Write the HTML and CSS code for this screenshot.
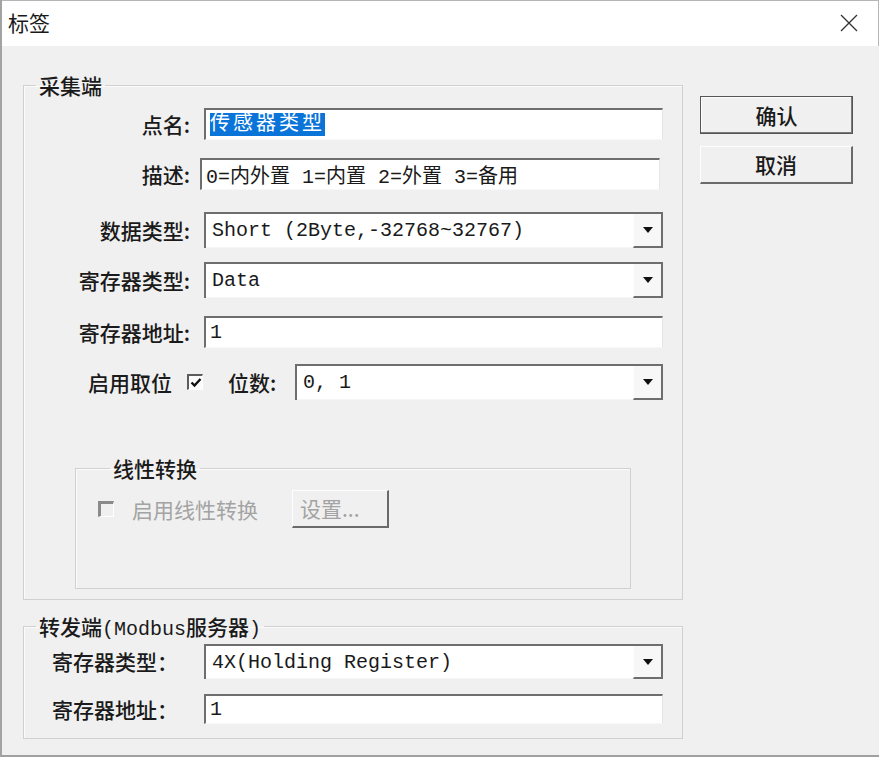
FILE: index.html
```html
<!DOCTYPE html>
<html lang="zh-CN">
<head>
    <meta charset="UTF-8">
    <title>标签</title>
    <link rel="stylesheet" href="styles.css">
</head>
<body>

<div class="window">
    <!-- Title bar -->
    <div class="titlebar">
        <span class="title">标签</span>
        <svg class="close" width="18" height="18" viewBox="0 0 18 18">
            <path d="M1 1L17 17M17 1L1 17" stroke="#333" stroke-width="1.3" fill="none"/>
        </svg>
    </div>

    <div class="content">
        <div class="main">
            <!-- 采集端 -->
            <fieldset class="group group-collect">
                <legend>采集端</legend>

                <div class="row r1">
                    <label>点名:</label>
                    <div class="edit"><span class="selected">传感器类型</span></div>
                </div>

                <div class="row r2">
                    <label>描述:</label>
                    <div class="edit shifted">0=内外置 1=内置 2=外置 3=备用</div>
                </div>

                <div class="row r3">
                    <label>数据类型:</label>
                    <div class="combo">
                        <div class="combo-text">Short (2Byte,-32768~32767)</div>
                        <div class="combo-btn"><span class="arrow"></span></div>
                    </div>
                </div>

                <div class="row r4">
                    <label>寄存器类型:</label>
                    <div class="combo">
                        <div class="combo-text">Data</div>
                        <div class="combo-btn"><span class="arrow"></span></div>
                    </div>
                </div>

                <div class="row r5">
                    <label>寄存器地址:</label>
                    <div class="edit">1</div>
                </div>

                <div class="row r6">
                    <span class="bit-label">启用取位</span>
                    <span class="check checked">
                        <svg width="12" height="12" viewBox="0 0 12 12"><path d="M1.5 5.5L4.5 8.5L10.5 2" stroke="#111" stroke-width="2.4" fill="none"/></svg>
                    </span>
                    <span class="count-label">位数:</span>
                    <div class="combo">
                        <div class="combo-text">0, 1</div>
                        <div class="combo-btn"><span class="arrow"></span></div>
                    </div>
                </div>

                <!-- 线性转换 -->
                <fieldset class="group sub-group">
                    <legend>线性转换</legend>
                    <div class="linear-row">
                        <span class="check disabled"></span>
                        <span class="disabled-text">启用线性转换</span>
                        <button class="btn small" disabled>设置...</button>
                    </div>
                </fieldset>
            </fieldset>

            <!-- 转发端 -->
            <fieldset class="group group-forward">
                <legend>转发端<span class="mono">(Modbus</span>服务器<span class="mono">)</span></legend>

                <div class="row f1">
                    <label>寄存器类型：</label>
                    <div class="combo">
                        <div class="combo-text">4X(Holding Register)</div>
                        <div class="combo-btn"><span class="arrow"></span></div>
                    </div>
                </div>

                <div class="row f2">
                    <label>寄存器地址：</label>
                    <div class="edit">1</div>
                </div>
            </fieldset>
        </div>

        <!-- Buttons -->
        <div class="actions">
            <button class="btn default">确认</button>
            <button class="btn">取消</button>
        </div>
    </div>
</div>

</body>
</html>
```

FILE: styles.css
```css
* {
    box-sizing: border-box;
}

body {
    margin: 0;
    font-family: "Noto Sans CJK SC", sans-serif;
    font-size: 21px;
    font-weight: 500;
    color: #1a1a1a;
    background-color: #fff;
}

.window {
    height: 757px;
    display: flex;
    flex-direction: column;
    border-left: 2px solid #a3a3a3;
    border-bottom: 2px solid #a0a0a0;
    background-color: #f0f0f0;
}

/* Title bar */
.titlebar {
    height: 46px;
    display: flex;
    align-items: center;
    justify-content: space-between;
    background-color: #fff;
    border-top: 1px solid #b5b5b5;
    border-right: 1px solid #b5b5b5;
    padding: 0 20px 0 6px;
}

.title {
    font-size: 21px;
    font-weight: 400;
    line-height: 1;
    margin-top: -2px;
}

.close {
    margin-top: -2px;
}

.content {
    flex: 1;
    display: flex;
    padding: 26px 0 0 21px;
}

.main {
    width: 660px;
}

/* Group boxes */
.group {
    margin: 0;
    padding: 0 19px 10px 0;
    border: 1px solid #d0d0d0;
    box-shadow: inset 1px 1px 0 #fbfbfb;
}

.group legend {
    margin-left: 12px;
    padding: 0 3px;
    height: 26px;
    line-height: 26px;
    font-size: 21px;
}

.mono {
    font-family: "Liberation Mono", monospace;
    font-size: 20px;
}

.row {
    display: flex;
    align-items: center;
}

.row label {
    width: 166px;
    margin-right: 14px;
    text-align: right;
    line-height: 1;
}

.r1 { margin-top: 10px; height: 32px; }
.r2 { margin-top: 18px; height: 32px; }
.r3 { margin-top: 22px; height: 36px; }
.r4 { margin-top: 14px; height: 36px; }
.r5 { margin-top: 18px; height: 32px; }
.r6 { margin-top: 16px; height: 36px; padding-left: 64px; }

/* Edit boxes */
.edit {
    flex: 1;
    height: 100%;
    display: flex;
    align-items: center;
    background-color: #fff;
    border-top: 2px solid #6e6e6e;
    border-left: 2px solid #6e6e6e;
    border-right: 1px solid #e6e6e6;
    border-bottom: 1px solid #f8f8f8;
    padding-left: 4px;
    font-family: "Liberation Mono", "Noto Sans CJK SC", monospace;
    font-size: 20px;
    font-weight: 400;
    white-space: nowrap;
}

.edit.shifted {
    margin-left: -4px;
    margin-right: 3px;
}

.selected {
    background-color: #0a74d8;
    color: #fff;
    letter-spacing: 3px;
    line-height: 23px;
}

/* Combo boxes */
.combo {
    flex: 1;
    height: 100%;
    display: flex;
    background-color: #fff;
    border-top: 2px solid #6e6e6e;
    border-left: 2px solid #6e6e6e;
    border-right: 2px solid #6e6e6e;
}

.combo-text {
    flex: 1;
    display: flex;
    align-items: center;
    padding-left: 6px;
    font-family: "Liberation Mono", "Noto Sans CJK SC", monospace;
    font-size: 20px;
    font-weight: 400;
    white-space: nowrap;
    border-bottom: 1px solid #f6f6f6;
}

.combo-btn {
    width: 28px;
    display: flex;
    align-items: center;
    justify-content: center;
    background-color: #f7f7f7;
    border-left: 1px solid #fdfdfd;
    border-bottom: 2px solid #6e6e6e;
}

.arrow {
    width: 0;
    height: 0;
    border-left: 5px solid transparent;
    border-right: 5px solid transparent;
    border-top: 6px solid #111;
}

/* Check boxes */
.check {
    width: 16px;
    height: 16px;
    display: inline-flex;
    align-items: center;
    justify-content: center;
    border-top: 2px solid #5c5c5c;
    border-left: 2px solid #5c5c5c;
    border-right: 1px solid #fff;
    border-bottom: 1px solid #fff;
}

.check.checked {
    margin-left: 1px;
    background-color: #fbfbfb;
}

.check.disabled {
    border-top: 3px solid #8a8a8a;
    border-left: 3px solid #8a8a8a;
    background-color: #f0f0f0;
}

.bit-label {
    width: 98px;
    line-height: 1;
}

.count-label {
    width: 67px;
    margin-left: 25px;
    line-height: 1;
}

/* Linear conversion */
.sub-group {
    margin: 55px 32px 0 51px;
    padding: 0 0 60px 22px;
}

.linear-row {
    display: flex;
    align-items: center;
    margin-top: 9px;
}

.disabled-text {
    width: 160px;
    margin-left: 18px;
    color: #a3a3a3;
    font-weight: 400;
}

/* Buttons */
.btn {
    width: 153px;
    height: 38px;
    font-family: "Noto Sans CJK SC", sans-serif;
    font-size: 21px;
    font-weight: 500;
    color: #1a1a1a;
    background-color: #f0f0f0;
    border-top: 1px solid #fdfdfd;
    border-left: 1px solid #fdfdfd;
    border-right: 2px solid #6a6a6a;
    border-bottom: 2px solid #6a6a6a;
    padding: 0;
    line-height: 1;
}

.btn.default {
    border: 1px solid #555;
    box-shadow: inset -1px -1px 0 #7a7a7a, inset 1px 1px 0 #fdfdfd;
}

.btn.small {
    width: 97px;
    text-align: left;
    padding-left: 7px;
    color: #a3a3a3;
    font-weight: 400;
}

.actions {
    display: flex;
    flex-direction: column;
    gap: 12px;
    margin-left: 17px;
    padding-top: 24px;
}

/* 转发端 */
.group-forward {
    margin-top: 13px;
    padding-bottom: 14px;
}

.group-forward .row label {
    width: 152px;
    margin-left: 28px;
    margin-right: 0;
    text-align: left;
}

.f1 { margin-top: 5px; height: 35px; }
.f2 { margin-top: 15px; height: 30px; }
```
